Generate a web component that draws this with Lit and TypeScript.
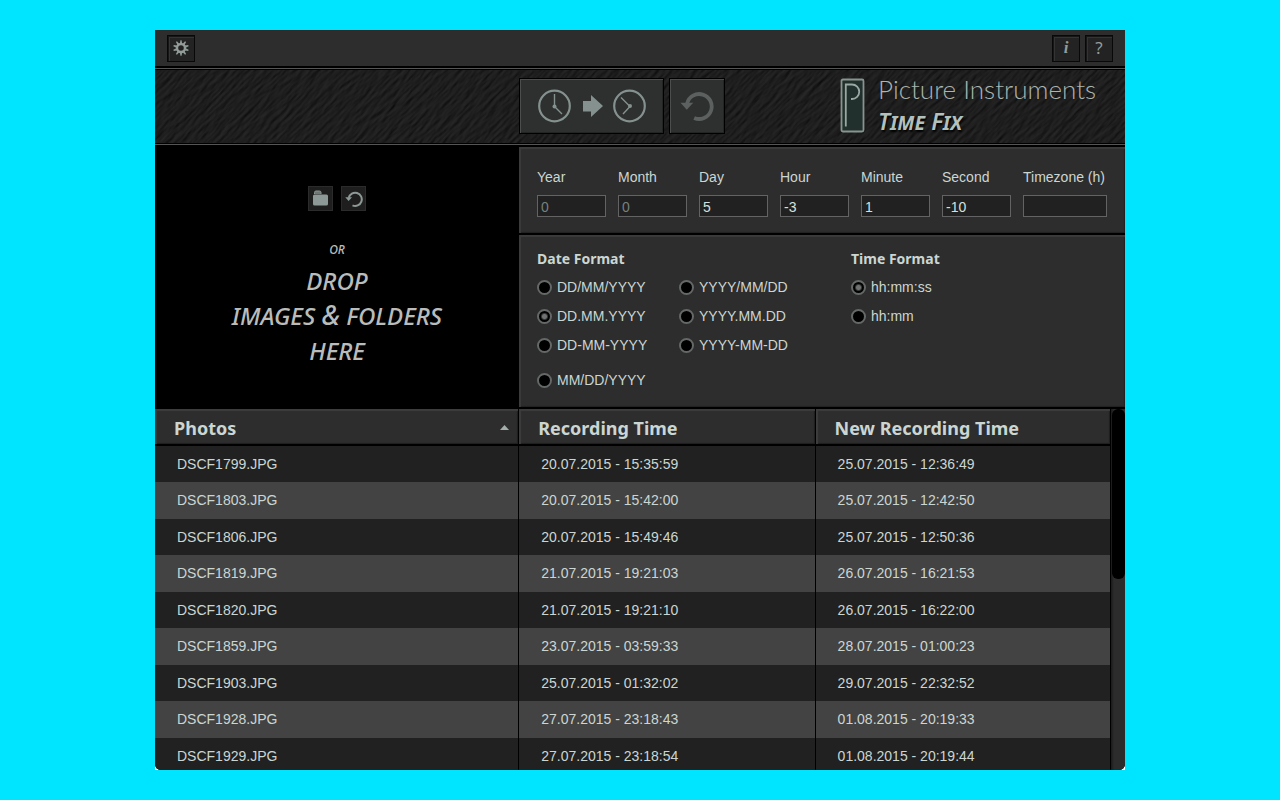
import { LitElement, html, css, svg } from "lit";
import { customElement, state } from "lit/decorators.js";

interface Photo {
  name: string;
  recorded: string;
  adjusted: string;
}

const photos: Photo[] = [
  { name: "DSCF1799.JPG", recorded: "20.07.2015 - 15:35:59", adjusted: "25.07.2015 - 12:36:49" },
  { name: "DSCF1803.JPG", recorded: "20.07.2015 - 15:42:00", adjusted: "25.07.2015 - 12:42:50" },
  { name: "DSCF1806.JPG", recorded: "20.07.2015 - 15:49:46", adjusted: "25.07.2015 - 12:50:36" },
  { name: "DSCF1819.JPG", recorded: "21.07.2015 - 19:21:03", adjusted: "26.07.2015 - 16:21:53" },
  { name: "DSCF1820.JPG", recorded: "21.07.2015 - 19:21:10", adjusted: "26.07.2015 - 16:22:00" },
  { name: "DSCF1859.JPG", recorded: "23.07.2015 - 03:59:33", adjusted: "28.07.2015 - 01:00:23" },
  { name: "DSCF1903.JPG", recorded: "25.07.2015 - 01:32:02", adjusted: "29.07.2015 - 22:32:52" },
  { name: "DSCF1928.JPG", recorded: "27.07.2015 - 23:18:43", adjusted: "01.08.2015 - 20:19:33" },
  { name: "DSCF1929.JPG", recorded: "27.07.2015 - 23:18:54", adjusted: "01.08.2015 - 20:19:44" },
];

const offsets = [
  { id: "year", label: "Year", value: "", hint: "0" },
  { id: "month", label: "Month", value: "", hint: "0" },
  { id: "day", label: "Day", value: "5", hint: "0" },
  { id: "hour", label: "Hour", value: "-3", hint: "0" },
  { id: "minute", label: "Minute", value: "1", hint: "0" },
  { id: "second", label: "Second", value: "-10", hint: "0" },
  { id: "timezone", label: "Timezone (h)", value: "", hint: "" },
];

const dateFormats = [
  ["DD/MM/YYYY", "DD.MM.YYYY", "DD-MM-YYYY", "MM/DD/YYYY"],
  ["YYYY/MM/DD", "YYYY.MM.DD", "YYYY-MM-DD"],
];
const timeFormats = ["hh:mm:ss", "hh:mm"];

const gearTeeth = Array.from({ length: 10 }, (_, i) => i * 36);

const gearIcon = html`<svg width="18" height="18" viewBox="-9 -9 18 18" aria-hidden="true">
  <circle r="4" fill="none" stroke="#929c99" stroke-width="2.4" />
  ${gearTeeth.map((a) => svg`<path d="M-1.1 -4.5L-.6 -7.8H.6L1.1 -4.5z" fill="#929c99" transform="rotate(${a})" />`)}
</svg>`;

const shiftIcon = html`<svg width="110" height="36" viewBox="0 0 110 36" fill="none" stroke="#84918e" aria-hidden="true">
  <circle cx="17.5" cy="18" r="15.3" stroke-width="2.2" />
  <path d="M17.5 6V18.5L25 26" stroke-width="1.4" />
  <circle cx="17.5" cy="18.5" r="2" fill="#84918e" stroke="none" />
  <path d="M46 13h8V7L66 18 54 29V23.5h-8z" fill="#84918e" stroke="none" />
  <circle cx="92.5" cy="18" r="15.3" stroke-width="2.2" />
  <path d="M84 9.5L93 18.5L86 26" stroke-width="1.4" />
  <circle cx="93" cy="18" r="2" fill="#84918e" stroke="none" />
</svg>`;

const undoIcon = (size: number, color: string, weight: number) => html`<svg
  width=${size} height=${size} viewBox="0 0 36 36" fill="none" aria-hidden="true">
  <path d="M7.5 15.5A13.2 13.2 0 1 1 15 30.6" stroke=${color} stroke-width=${weight} />
  <path d="M.5 14.5H14L7.2 22z" fill=${color} />
</svg>`;

const folderIcon = html`<svg width="17" height="17" viewBox="0 0 17 17" aria-hidden="true">
  <path d="M2.5 4V2.5Q2.5 1 4 1H7.5Q9 1 9 2.5V4" fill="#6d7774" stroke="#8d9996" />
  <rect x="1" y="4.5" width="15" height="11" rx="1.5" fill="#8d9996" />
</svg>`;

const brandMark = html`<svg width="25" height="55" viewBox="0 0 25 55" fill="none" aria-hidden="true">
  <rect x="1.5" y="1.5" width="22" height="52" rx="1.5" fill="#22302d" stroke="#87948f" stroke-width="1.8" />
  <path d="M5.8 48.5V6.500H12A7.200 7.200 0 0 1 12 21H11" stroke="#9aa8a3" stroke-width="1.800" />
</svg>`;

const brushedTexture = html`<svg class="texture" aria-hidden="true">
  <filter id="brushed" x="0" y="0" width="100%" height="100%" color-interpolation-filters="sRGB">
    <feTurbulence type="fractalNoise" baseFrequency=".06 .3" numOctaves="5" seed="8" />
    <feColorMatrix values="0 0 0 0 0  0 0 0 0 0  0 0 0 0 0  1 0 0 0 0" />
    <feDiffuseLighting surfaceScale="1" lighting-color="#2b2b2b">
      <feDistantLight azimuth="250" elevation="44" />
    </feDiffuseLighting>
  </filter>
  <g transform="rotate(-45)">
    <rect x="-200" y="-50" width="1000" height="900" filter="url(#brushed)" />
  </g>
</svg>`;

@customElement("app-root")
export class AppRoot extends LitElement {
  @state() private dateFormat = "DD.MM.YYYY";
  @state() private timeFormat = "hh:mm:ss";

  static styles = css`
    :host {
      display: flex;
      flex-direction: column;
      box-sizing: border-box;
      height: 100vh;
      padding: 30px 16px;
      background: #00e5ff;
      color: #cbd6d3;
      font: 14px/18px "Liberation Sans", Arial, sans-serif;
    }
    * {
      box-sizing: border-box;
    }
    button {
      display: flex;
      align-items: center;
      justify-content: center;
      padding: 0;
      border: 1px solid #000;
    }
    svg {
      display: block;
    }
    .frame {
      flex: 1;
      min-height: 0;
      width: 100%;
      max-width: 970px;
      margin: 0 auto;
      background: linear-gradient(#00e5ff 50%, #fff 50%);
    }
    .window {
      display: flex;
      flex-direction: column;
      height: 100%;
      overflow: hidden;
      border-radius: 0 0 6px 6px;
      background: #000;
    }
    .topbar {
      display: flex;
      gap: 5px;
      height: 36px;
      padding: 5px 12px 0;
      background: #2d2d2d;
    }
    .spacer {
      flex: 1;
    }
    .tool {
      width: 28px;
      height: 27px;
      padding-bottom: 2px;
      border: 1px solid #080808;
      background: #232323;
      box-shadow: inset 1px 1px #161616, inset 2px 2px #343434;
      color: #929c99;
      font: italic bold 17px/20px "Liberation Serif", serif;
    }
    .tool-help {
      font: 17px/20px "Noto Sans", sans-serif;
    }
    .rule {
      height: 4px;
      border: solid #000;
      border-width: 2px 0 1px;
      background: #555;
    }
    .rule-thin {
      height: 3px;
      border-width: 1px 0;
    }
    .banner {
      position: relative;
      display: grid;
      grid-template-columns: 364fr 321fr 285fr;
      align-items: center;
      height: 73px;
      padding-bottom: 2px;
      overflow: hidden;
      background: #1c1c1c;
    }
    .texture {
      position: absolute;
      inset: 0;
      width: 100%;
      height: 100%;
    }
    .actions {
      position: relative;
      grid-column: 2;
      display: flex;
      gap: 5px;
    }
    .action {
      height: 56px;
      width: 56px;
      background: #2e3030;
      box-shadow: inset 1px 1px #4c4e4e, inset -1px -1px #232525;
    }
    .action-wide {
      width: 145px;
    }
    .brand {
      position: relative;
      display: flex;
      gap: 13px;
      align-items: center;
      white-space: nowrap;
    }
    .brand-text {
      display: grid;
      gap: 2px;
      padding-bottom: 2px;
    }
    .brand-name {
      color: #a9b5b1;
      font: 300 26px/30px Lato, sans-serif;
    }
    .brand-product {
      color: #b4c0bc;
      font: italic 600 23px/30px "Noto Sans", sans-serif;
      font-variant-caps: small-caps;
      text-shadow: 1px 2px 2px #000;
    }
    .upper {
      display: grid;
      grid-template-columns: 364fr 606fr;
    }
    .drop {
      display: flex;
      flex-direction: column;
      align-items: center;
      padding-top: 40px;
      color: #b9bcbb;
      font: italic 500 24px/35px "Noto Sans", sans-serif;
      text-align: center;
    }
    .drop-tools {
      display: flex;
      gap: 8px;
    }
    .drop-tool {
      width: 25px;
      height: 25px;
      border: 1px solid #2b2b2b;
      background: #1e1e1e;
    }
    .drop-or {
      margin: 29px 0 3px;
      font-size: 12px;
      line-height: 20px;
    }
    .drop-text {
      margin: 0;
    }
    .amp {
      font-size: 27px;
      line-height: 20px;
    }
    .panels {
      display: grid;
      gap: 2px;
      padding: 1px 0 2px;
    }
    .panel {
      padding: 0 18px;
      background: #2d2d2d;
      box-shadow: inset 2px 2px 1px #3b3b3b, inset -1px -1px 1px #222;
    }
    .offsets {
      display: grid;
      grid-template-columns: repeat(6, 69fr) 84fr;
      gap: 12px;
      padding-top: 21px;
      padding-bottom: 16px;
    }
    .offset {
      display: grid;
      gap: 9px;
      min-width: 0;
      white-space: nowrap;
    }
    .field {
      width: 100%;
      height: 22px;
      padding: 1px 3px 0;
      border: 1px solid #636363;
      border-radius: 0;
      background: #212121;
      color: #d5e0dd;
      font: inherit;
      outline: none;
    }
    .field::placeholder {
      color: #76807d;
      opacity: 1;
    }
    .formats {
      display: grid;
      grid-template-columns: 314fr 256fr;
      height: 172px;
      padding-top: 14px;
    }
    .group {
      min-width: 0;
      margin: 0;
      padding: 0;
      border: 0;
    }
    .legend {
      padding: 0;
      font: bold 14px/20px "Noto Sans", sans-serif;
    }
    .choices {
      display: grid;
      grid-template-columns: 142fr 172fr;
      align-items: start;
      padding-top: 9px;
    }
    .choice-list {
      display: grid;
      gap: 11px;
    }
    .choice {
      display: flex;
      align-items: center;
      gap: 5px;
    }
    .choice:nth-child(4) {
      padding-top: 6px;
    }
    .radio {
      appearance: none;
      width: 15px;
      height: 15px;
      margin: 1px 0 0;
      border: 2px solid #646867;
      border-radius: 50%;
      background: #000;
    }
    .radio:checked {
      background: radial-gradient(circle, #6e7271 2px, #000 4px);
    }
    .lower {
      display: flex;
      flex: 1;
      min-height: 0;
      background: #262626;
    }
    .list {
      flex: 1;
      overflow: hidden;
    }
    .table {
      width: 100%;
      table-layout: fixed;
      border-collapse: separate;
      border-spacing: 0;
    }
    .col-name {
      width: 38.1%;
    }
    .col-time {
      width: 31%;
    }
    .head {
      height: 37px;
      padding: 2px 9px 0 19px;
      border-right: 1px solid #000;
      border-bottom: 2px solid #000;
      background: #2d2d2d;
      box-shadow: inset 2px 2px 1px #3d3d3d, inset -1px -1px 1px #1f1f1f;
      font: bold 18px/24px "Noto Sans", sans-serif;
      text-align: left;
    }
    .head-row {
      display: flex;
      align-items: center;
      justify-content: space-between;
    }
    .cell {
      height: 36px;
      padding: 0 22px;
      border-right: 1px solid #000;
      background: #212121;
    }
    .row:nth-child(even) .cell {
      height: 37px;
      padding-bottom: 1px;
      background: #434343;
    }
    .scroll {
      width: 14px;
      padding-left: 1px;
      background: linear-gradient(90deg, #1a1a1a, #2c2c2c 3px);
    }
    .thumb {
      height: 47%;
      border-radius: 6px;
      background: #000;
    }
  `;

  private choice(group: string, value: string, current: string, pick: (v: string) => void) {
    return html`<label class="choice">
      <input class="radio" type="radio" name=${group} .checked=${value === current} @change=${() => pick(value)} />
      <span>${value}</span>
    </label>`;
  }

  render() {
    return html`
      <div class="frame">
        <main class="window">
          <header class="topbar">
            <button class="tool" aria-label="Settings">${gearIcon}</button>
            <span class="spacer"></span>
            <button class="tool">i</button>
            <button class="tool tool-help">?</button>
          </header>
          <div class="rule"></div>
          <section class="banner">
            ${brushedTexture}
            <div class="actions">
              <button class="action action-wide" aria-label="Apply time shift">${shiftIcon}</button>
              <button class="action" aria-label="Undo">${undoIcon(34, "#5c6160", 4)}</button>
            </div>
            <div class="brand">
              ${brandMark}
              <div class="brand-text">
                <div class="brand-name">Picture Instruments</div>
                <div class="brand-product">Time Fix</div>
              </div>
            </div>
          </section>
          <div class="rule rule-thin"></div>
          <section class="upper">
            <div class="drop">
              <div class="drop-tools">
                <button class="drop-tool" aria-label="Open folder">${folderIcon}</button>
                <button class="drop-tool" aria-label="Reset list">${undoIcon(18, "#8d9996", 4)}</button>
              </div>
              <div class="drop-or">OR</div>
              <p class="drop-text">DROP<br />IMAGES <span class="amp">&amp;</span> FOLDERS<br />HERE</p>
            </div>
            <div class="panels">
              <div class="panel offsets">
                ${offsets.map(
                  (o) => html`<div class="offset">
                    <label for=${o.id}>${o.label}</label>
                    <input class="field" id=${o.id} type="text" .value=${o.value} placeholder=${o.hint} />
                  </div>`
                )}
              </div>
              <div class="panel formats">
                <fieldset class="group">
                  <legend class="legend">Date Format</legend>
                  <div class="choices">
                    ${dateFormats.map(
                      (list) => html`<div class="choice-list">
                        ${list.map((f) => this.choice("date", f, this.dateFormat, (v) => (this.dateFormat = v)))}
                      </div>`
                    )}
                  </div>
                </fieldset>
                <fieldset class="group">
                  <legend class="legend">Time Format</legend>
                  <div class="choices">
                    <div class="choice-list">
                      ${timeFormats.map((f) => this.choice("time", f, this.timeFormat, (v) => (this.timeFormat = v)))}
                    </div>
                  </div>
                </fieldset>
              </div>
            </div>
          </section>
          <section class="lower">
            <div class="list">
              <table class="table">
                <colgroup>
                  <col class="col-name" />
                  <col class="col-time" />
                  <col />
                </colgroup>
                <thead>
                  <tr>
                    <th class="head" aria-sort="ascending">
                      <div class="head-row">
                        Photos
                        <svg width="9" height="5" viewBox="0 0 9 5" aria-hidden="true"><path d="M0 5L4.5 0L9 5z" fill="#a3adaa" /></svg>
                      </div>
                    </th>
                    <th class="head">Recording Time</th>
                    <th class="head">New Recording Time</th>
                  </tr>
                </thead>
                <tbody>
                  ${photos.map(
                    (p) => html`<tr class="row">
                      <td class="cell">${p.name}</td>
                      <td class="cell">${p.recorded}</td>
                      <td class="cell">${p.adjusted}</td>
                    </tr>`
                  )}
                </tbody>
              </table>
            </div>
            <div class="scroll"><div class="thumb"></div></div>
          </section>
        </main>
      </div>
    `;
  }
}
